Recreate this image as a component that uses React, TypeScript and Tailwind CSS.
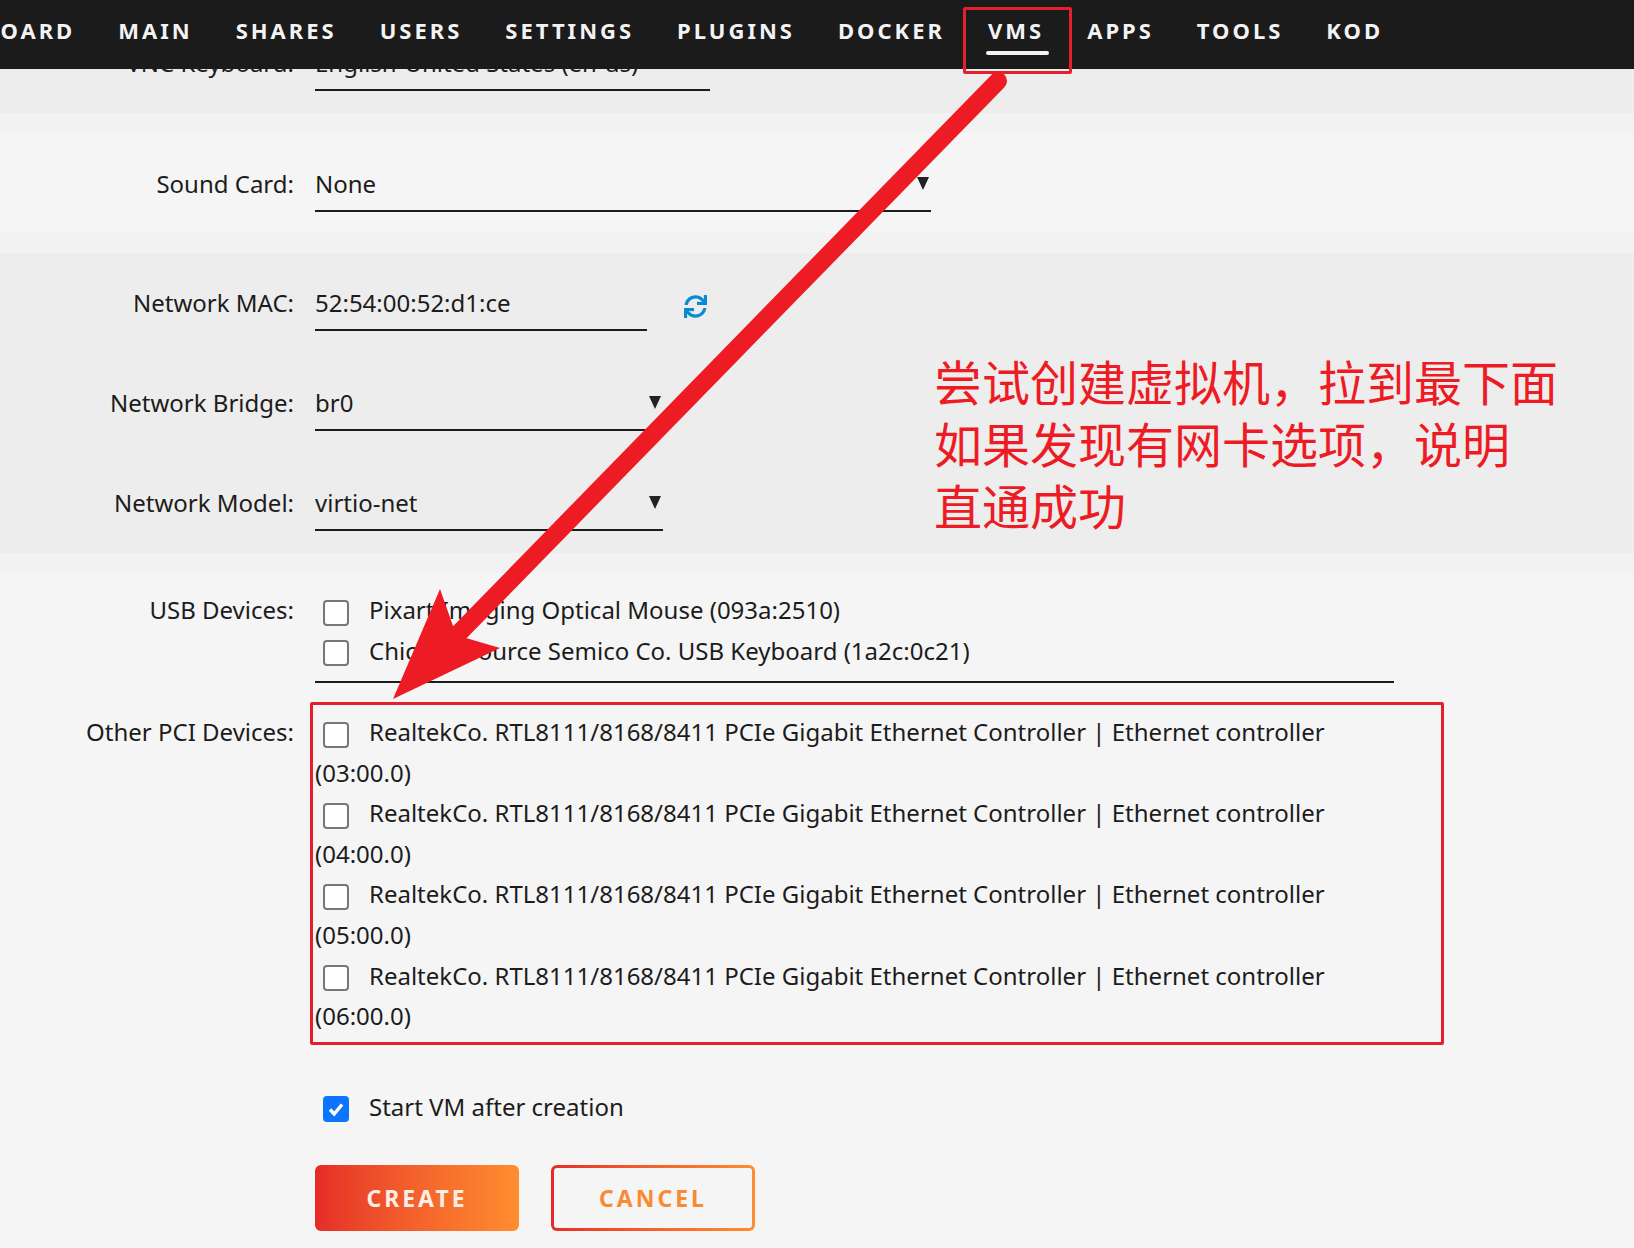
import React from 'react';
import { FaSync } from 'react-icons/fa';

const navItems = ['DASHBOARD', 'MAIN', 'SHARES', 'USERS', 'SETTINGS', 'PLUGINS', 'DOCKER', 'VMS', 'APPS', 'TOOLS', 'KOD'];
const pciDevices = ['03:00.0', '04:00.0', '05:00.0', '06:00.0'];

function Box({ checked }: { checked?: boolean }) {
  if (checked) {
    return (
      <span className="inline-flex w-[26px] h-[26px] ml-[8px] mr-[20px] rounded-[4px] bg-[#0b76fb] items-center justify-center align-middle">
        <svg width="18" height="18" viewBox="0 0 18 18">
          <path d="M3 9.5 L7.2 14 L15 4.5" fill="none" stroke="#fff" strokeWidth="3.4" />
        </svg>
      </span>
    );
  }
  return <span className="inline-block w-[26px] h-[26px] ml-[8px] mr-[20px] rounded-[4px] bg-white border-2 border-[#777] align-middle" />;
}

function Field({ width, value, arrow }: { width: string; value: string; arrow?: boolean }) {
  return (
    <div className={`${width} h-[48px] border-b-2 border-[#1c1c1c] flex justify-between leading-[40px]`}>
      <span>{value}</span>
      {arrow && (
        <svg width="14" height="14" viewBox="0 0 14 14" className="mt-[13px] mr-[1px]">
          <path d="M1 0 L13 0 L7 13 Z" fill="#222" />
        </svg>
      )}
    </div>
  );
}

function Row({ label, children }: { label: string; children: React.ReactNode }) {
  return (
    <div className="flex">
      <div className="w-[294px] mr-[21px] text-right leading-[40px] shrink-0">{label}</div>
      {children}
    </div>
  );
}

export default function App() {
  return (
    <div className="relative w-[1634px] h-[1248px] overflow-hidden bg-[#f5f5f5] text-[#1c1c1c] text-[24px] font-['Noto_Sans','Noto_Sans_CJK_SC',sans-serif]">
      <nav className="relative z-10 h-[69px] bg-[#1b1b1b] flex items-start justify-end pr-[251px] gap-[43px] overflow-hidden">
        {navItems.map((item) => (
          <div key={item} className="relative pt-[12px] shrink-0 text-[22px] font-bold tracking-[3px] leading-[36px] text-[#f3f3f3]">
            {item}
            {item === 'VMS' && <div className="absolute left-[-2px] right-[-5px] top-[51px] h-[4px] rounded-[2px] bg-[#f3f3f3]" />}
          </div>
        ))}
      </nav>

      <div className="-mt-[69px] bg-[#ededed] pt-[43px] pb-[22px]">
        <Row label="VNC Keyboard:">
          <Field width="w-[395px]" value="English-United States (en-us)" />
        </Row>
      </div>
      <div className="h-[20px] bg-[#f2f2f2]" />

      <div className="pt-[31px] pb-[21px]">
        <Row label="Sound Card:">
          <Field width="w-[616px]" value="None" arrow />
        </Row>
      </div>
      <div className="h-[20px] bg-[#f2f2f2]" />

      <div className="bg-[#ededed] pt-[30px] pb-[22px] flex flex-col gap-[52px]">
        <Row label="Network MAC:">
          <Field width="w-[332px]" value="52:54:00:52:d1:ce" />
          <FaSync className="ml-[37px] mt-[12px] text-[#0a8ad0] text-[23px]" />
        </Row>
        <Row label="Network Bridge:">
          <Field width="w-[348px]" value="br0" arrow />
        </Row>
        <Row label="Network Model:">
          <Field width="w-[348px]" value="virtio-net" arrow />
        </Row>
      </div>
      <div className="h-[20px] bg-[#f2f2f2]" />

      <div className="pt-[17px]">
        <Row label="USB Devices:">
          <div className="mt-[12px] -ml-0 hidden" />
          <div className="w-[1079px] border-b-2 border-[#1c1c1c] pb-[10px] leading-[40.5px]">
            <div>
              <Box />
              Pixart Imaging Optical Mouse (093a:2510)
            </div>
            <div>
              <Box />
              Chicony Source Semico Co. USB Keyboard (1a2c:0c21)
            </div>
          </div>
        </Row>
        <div className="mt-[29px]">
          <Row label="Other PCI Devices:">
            <div className="w-[1079px] border-b-2 border-[#1c1c1c] pb-[6px] leading-[40.6px]">
              {pciDevices.map((id) => (
                <div key={id}>
                  <Box />
                  RealtekCo. RTL8111/8168/8411 PCIe Gigabit Ethernet Controller | Ethernet controller ({id})
                </div>
              ))}
            </div>
          </Row>
        </div>
        <div className="ml-[315px] mt-[42px] leading-[40px]">
          <Box checked />
          Start VM after creation
        </div>
        <div className="ml-[315px] mt-[38px] flex gap-[32px] text-[23px] font-bold tracking-[3px]">
          <button className="w-[204px] h-[66px] rounded-[6px] bg-gradient-to-r from-[#e52b28] to-[#ff8d2f] text-[#fbeee6]">CREATE</button>
          <div className="w-[204px] h-[66px] rounded-[6px] p-[3px] bg-gradient-to-r from-[#e52b28] to-[#ff8d2f]">
            <button className="w-full h-full rounded-[3px] bg-[#f5f5f5] text-[#f98a33] tracking-[3px]">CANCEL</button>
          </div>
        </div>
      </div>

      {/* annotations drawn over the screenshot */}
      <div className="absolute z-20 left-[963px] top-[7px] w-[109px] h-[67px] border-[3px] border-[#e5202e] rounded-[2px]" />
      <div className="absolute z-20 left-[310px] top-[702px] w-[1134px] h-[343px] border-[3px] border-[#e5202e] rounded-[2px]" />
      <svg className="absolute z-20 inset-0 pointer-events-none" width="1634" height="1248" viewBox="0 0 1634 1248">
        <line x1="998" y1="81" x2="460" y2="632" stroke="#ed1c24" strokeWidth="18" strokeLinecap="round" />
        <path d="M393 699 L440 589 L453 626 L466 638 L500 648 Z" fill="#ed1c24" />
      </svg>
      <div className="absolute z-20 left-[934px] top-[349px] w-[660px] text-[48px] leading-[62px] text-[#ed1c24] font-['Noto_Sans_CJK_SC',sans-serif]">
        尝试创建虚拟机，拉到最下面
        <br />
        如果发现有网卡选项，说明
        <br />
        直通成功
      </div>
    </div>
  );
}
